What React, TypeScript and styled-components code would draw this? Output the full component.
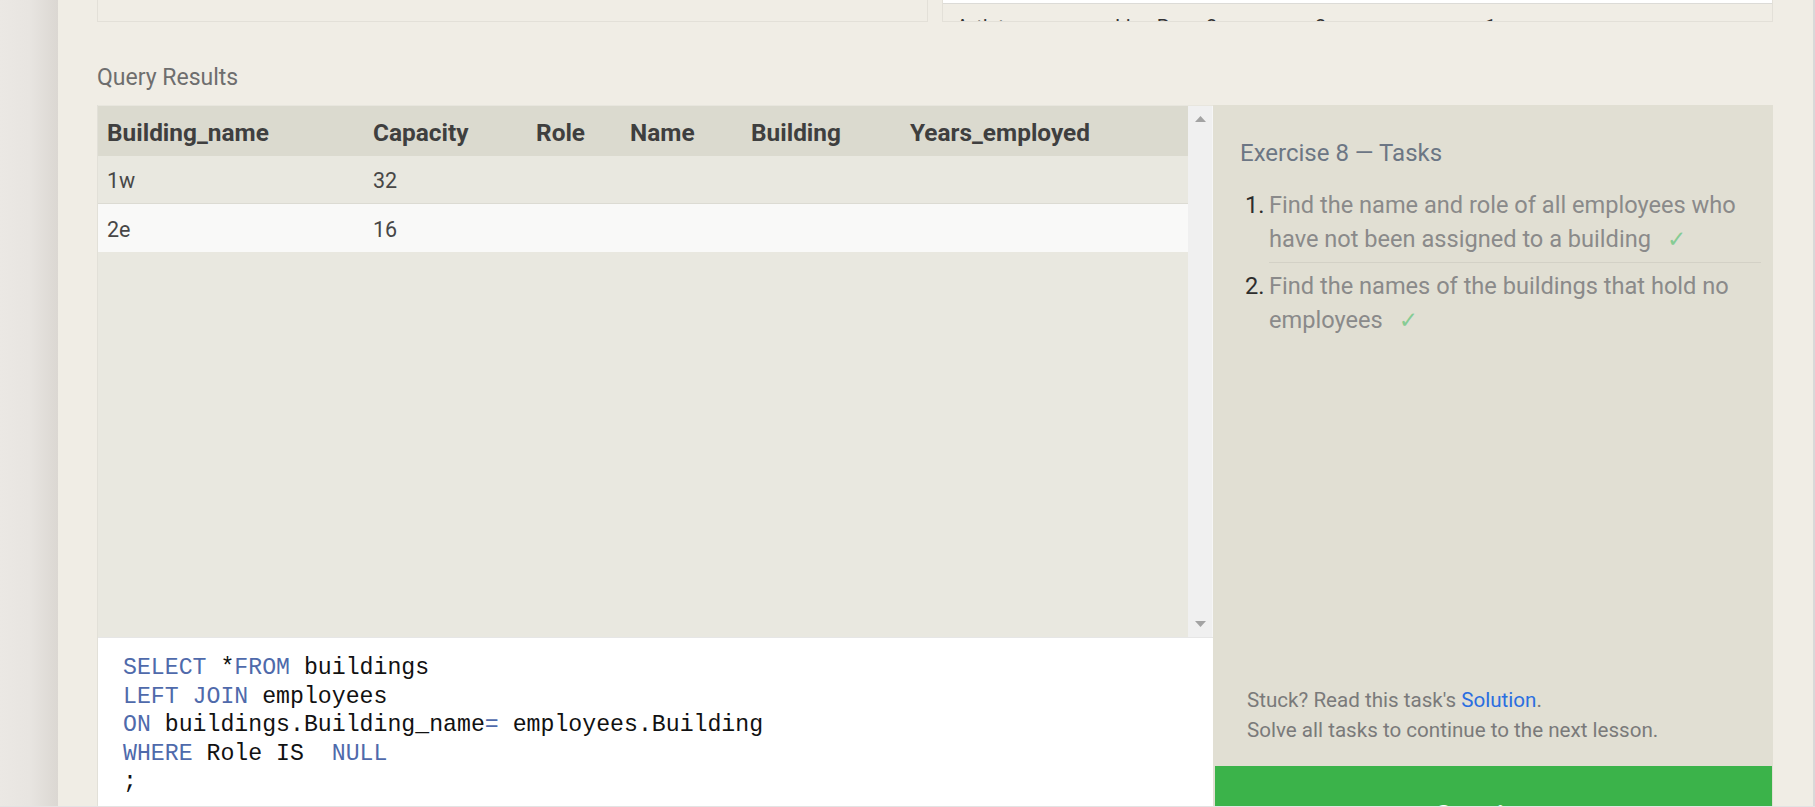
import React from "react";
import styled, { createGlobalStyle } from "styled-components";

const Global = createGlobalStyle`
  html, body { margin: 0; padding: 0; overflow: hidden; background: #f0ede5; }
  body { font-family: Roboto, "Noto Sans", sans-serif; }
  * { box-sizing: border-box; }
`;

const Page = styled.div`
  display: flex;
  height: 807px;
  border-bottom: 1px solid #e3e3e3;
  overflow: hidden;
`;

const SideStrip = styled.div`
  width: 58px;
  flex: none;
  background: linear-gradient(to right, #ebe8e4 0%, #e8e5e1 50%, #dbd7d2 100%);
`;

const Main = styled.main`
  flex: 1;
  min-width: 0;
  background: #f0ede5;
  border-right: 2px solid #d9d9d9;
  padding: 0 40px 0 39px;
  display: flex;
  flex-direction: column;
`;

const TopRow = styled.div`
  display: grid;
  grid-template-columns: 831px 831px;
  column-gap: 14px;
  height: 22px;
  flex: none;
`;

const TopBox = styled.div`
  border: 1px solid #e3e0d8;
  border-top: none;
  overflow: hidden;
`;

const WhiteBar = styled.div`
  height: 4px;
  background: #ffffff;
  border-bottom: 1px solid #dcdbd7;
`;

const PeekRow = styled.div`
  display: grid;
  grid-template-columns: 159px 91px 109px 170px 1fr;
  padding: 11px 0 0 13px;
  height: 17px;
  overflow: hidden;
  font-size: 20px;
  line-height: 24px;
  color: #333;
`;

const Heading = styled.h2`
  margin: 43px 0 14px;
  font-size: 23px;
  line-height: 26px;
  font-weight: 400;
  color: #6e6e6e;
`;

const Results = styled.section`
  display: grid;
  grid-template-columns: 1116px 560px;
  height: 761px;
  flex: none;
`;

const LeftCol = styled.div`
  display: flex;
  flex-direction: column;
  border-left: 1px solid #e2e0d8;
`;

const TablePane = styled.div`
  height: 532px;
  flex: none;
  display: grid;
  grid-template-columns: 1fr 25px;
  border-top: 1px solid #e8e6de;
  background: #e9e8e0;
`;

const Table = styled.div`
  display: flex;
  flex-direction: column;
`;

const Row = styled.div<{ $kind: "head" | "odd" | "even" }>`
  display: grid;
  grid-template-columns: 266px 163px 94px 121px 159px 1fr;
  align-items: center;
  padding-left: 9px;
  height: ${(p) => (p.$kind === "head" ? 50 : 48)}px;
  background: ${(p) => (p.$kind === "head" ? "#dbdacf" : p.$kind === "odd" ? "#e9e8e0" : "#f9f9f8")};
  border-bottom: ${(p) => (p.$kind === "odd" ? "1px solid #dcdbd3" : "none")};
  font-size: ${(p) => (p.$kind === "head" ? 24.4 : 21.5)}px;
  font-weight: ${(p) => (p.$kind === "head" ? 700 : 400)};
  color: ${(p) => (p.$kind === "head" ? "#3f3f3f" : "#474747")};
  padding-top: ${(p) => (p.$kind === "head" ? 3 : 2)}px;
`;

const Cell = styled.span`
  white-space: nowrap;
`;

const ScrollBar = styled.div`
  background: #f0f0f0;
  display: flex;
  flex-direction: column;
  justify-content: space-between;
  align-items: center;
  padding: 10px 0;
  border-right: 1px solid #f6f6f6;
`;

const Arrow = styled.svg`
  display: block;
  fill: #a3a3a3;
`;

const Editor = styled.pre`
  flex: 1;
  margin: 0;
  background: #ffffff;
  border-top: 1px solid #e6e6e6;
  padding: 16px 25px;
  font-family: "Liberation Mono", "DejaVu Sans Mono", monospace;
  font-size: 23.2px;
  line-height: 28.6px;
  color: #111;
`;

const Kw = styled.span`
  color: #4f6aab;
`;

const Tasks = styled.aside`
  background: #e1dfd3;
  display: flex;
  flex-direction: column;
  padding: 33px 0 0 0;
`;

const TasksTitle = styled.h3`
  margin: 0 12px 0 27px;
  font-size: 24px;
  line-height: 30px;
  font-weight: 400;
  color: #6c7684;
`;

const TaskList = styled.ol`
  list-style: none;
  margin: 14px 12px 0 32px;
  padding: 0;
`;

const TaskItem = styled.li`
  display: grid;
  grid-template-columns: 24px 1fr;
  font-size: 23.6px;
  line-height: 34px;
`;

const TaskNum = styled.span`
  color: #2d2d2d;
  padding-top: 6px;
`;

const TaskText = styled.span<{ $divider?: boolean }>`
  color: #8a8a8a;
  padding: 6px 0;
  border-bottom: ${(p) => (p.$divider ? "1px solid #d3d1c6" : "none")};
`;

const Check = styled.span`
  color: #86cc94;
  margin-left: 16px;
  font-family: "DejaVu Sans", sans-serif;
  font-size: 23px;
`;

const Spacer = styled.div`
  flex: 1;
`;

const Footer = styled.div`
  margin: 0 12px 21px 34px;
  font-size: 20.6px;
  line-height: 30px;
  color: #7a7a7a;
`;

const SolutionLink = styled.a`
  color: #2b6ee0;
  text-decoration: none;
`;

const ContinueButton = styled.button`
  height: 100px;
  margin: 0 1px 0 2px;
  border: none;
  background: #3bb34a;
  color: #ffffff;
  font-family: Roboto, "Noto Sans", sans-serif;
  font-size: 30px;
  line-height: 36px;
  font-weight: 500;
  padding: 0;
  display: flex;
  align-items: center;
  justify-content: center;
`;

const headers = ["Building_name", "Capacity", "Role", "Name", "Building", "Years_employed"];
const rows = [
  ["1w", "32", "", "", "", ""],
  ["2e", "16", "", "", "", ""],
];

export default function App() {
  return (
    <>
      <Global />
      <Page>
        <SideStrip />
        <Main>
          <TopRow>
            <TopBox />
            <TopBox>
              <WhiteBar />
              <PeekRow>
                <Cell>Artist</Cell>
                <Cell>Lisa P.</Cell>
                <Cell>2w</Cell>
                <Cell>2</Cell>
                <Cell>1</Cell>
              </PeekRow>
            </TopBox>
          </TopRow>

          <Heading>Query Results</Heading>

          <Results>
            <LeftCol>
              <TablePane>
                <Table>
                  <Row $kind="head">
                    {headers.map((h) => (
                      <Cell key={h}>{h}</Cell>
                    ))}
                  </Row>
                  {rows.map((r, i) => (
                    <Row key={i} $kind={i % 2 === 0 ? "odd" : "even"}>
                      {r.map((c, j) => (
                        <Cell key={j}>{c}</Cell>
                      ))}
                    </Row>
                  ))}
                </Table>
                <ScrollBar>
                  <Arrow width="11" height="6" viewBox="0 0 11 6">
                    <polygon points="5.5,0 11,6 0,6" />
                  </Arrow>
                  <Arrow width="11" height="6" viewBox="0 0 11 6">
                    <polygon points="0,0 11,0 5.5,6" />
                  </Arrow>
                </ScrollBar>
              </TablePane>
              <Editor>
                <Kw>SELECT</Kw> *<Kw>FROM</Kw> buildings{"\n"}
                <Kw>LEFT JOIN</Kw> employees{"\n"}
                <Kw>ON</Kw> buildings.Building_name<Kw>=</Kw> employees.Building{"\n"}
                <Kw>WHERE</Kw> Role IS  <Kw>NULL</Kw>{"\n"}
                ;
              </Editor>
            </LeftCol>

            <Tasks>
              <TasksTitle>Exercise 8 — Tasks</TasksTitle>
              <TaskList>
                <TaskItem>
                  <TaskNum>1.</TaskNum>
                  <TaskText $divider>
                    Find the name and role of all employees who have not been assigned to a building
                    <Check>✓</Check>
                  </TaskText>
                </TaskItem>
                <TaskItem>
                  <TaskNum>2.</TaskNum>
                  <TaskText>
                    Find the names of the buildings that hold no employees
                    <Check>✓</Check>
                  </TaskText>
                </TaskItem>
              </TaskList>
              <Spacer />
              <Footer>
                Stuck? Read this task's <SolutionLink href="#">Solution</SolutionLink>.
                <br />
                Solve all tasks to continue to the next lesson.
              </Footer>
              <ContinueButton>Continue</ContinueButton>
            </Tasks>
          </Results>
        </Main>
      </Page>
    </>
  );
}
